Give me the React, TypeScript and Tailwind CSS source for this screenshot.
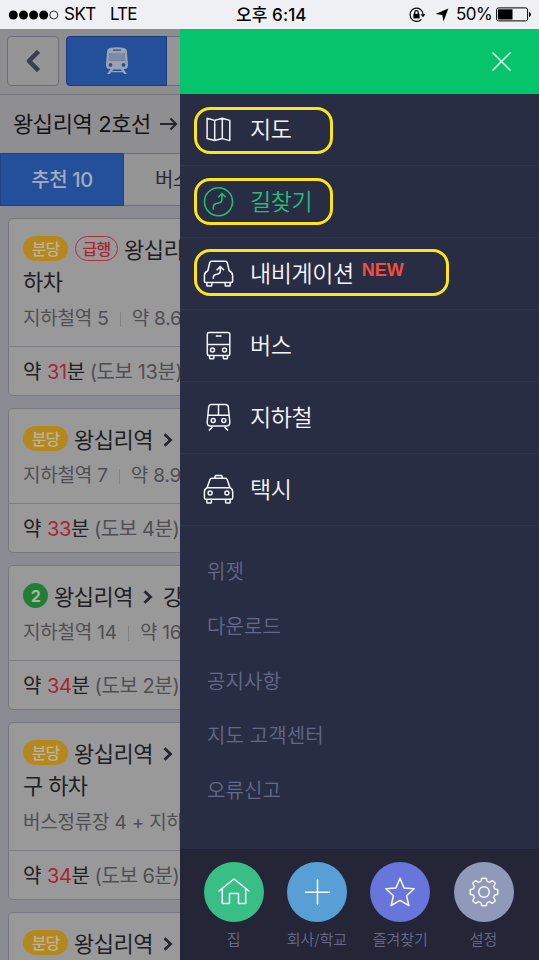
import type { ReactNode } from 'react';

interface Route {
  id: number;
  badge: ReactNode;
  title: ReactNode;
  titleEnd?: string;
  meta: string[];
  minutes: number;
  walk: string;
}

const BundangBadge = () => (
  <span className="flex h-[25px] w-[45px] shrink-0 items-center justify-center rounded-full bg-[#b4881c] pt-px text-[16px] font-medium tracking-[-1px] text-[#b9b4a4]">
    분당
  </span>
);

const ExpressBadge = () => (
  <span className="ml-[7px] flex h-[25px] w-[43px] shrink-0 items-center justify-center rounded-full border border-[#a83244] pt-px text-[16px] font-medium tracking-[-0.8px] text-[#a82438]">
    급행
  </span>
);

const LineTwoBadge = () => (
  <span className="flex size-[25px] shrink-0 items-center justify-center rounded-full bg-[#1f7f35] text-[16px] font-bold text-[#a9b5a9]">
    2
  </span>
);

const Arrow = () => (
  <svg className="ml-[10px] mr-[10px] shrink-0" width="10" height="14" viewBox="0 0 10 14" fill="none" stroke="#25262e" strokeWidth="2.8">
    <path d="M1.5 1.3L7.5 7L1.5 12.7" />
  </svg>
);

const routes: Route[] = [
  {
    id: 1,
    badge: (
      <>
        <BundangBadge />
        <ExpressBadge />
      </>
    ),
    title: '왕십리역',
    titleEnd: '하차',
    meta: ['지하철역 5', '약 8.6km'],
    minutes: 31,
    walk: '(도보 13분)',
  },
  { id: 2, badge: <BundangBadge />, title: <>왕십리역<Arrow /></>, meta: ['지하철역 7', '약 8.9km'], minutes: 33, walk: '(도보 4분)' },
  { id: 3, badge: <LineTwoBadge />, title: <>왕십리역<Arrow />강남역</>, meta: ['지하철역 14', '약 16km'], minutes: 34, walk: '(도보 2분)' },
  {
    id: 4,
    badge: <BundangBadge />,
    title: <>왕십리역<Arrow /></>,
    titleEnd: '구 하차',
    meta: ['버스정류장 4 + 지하철역 5'],
    minutes: 34,
    walk: '(도보 6분)',
  },
  { id: 5, badge: <BundangBadge />, title: <>왕십리역<Arrow /></>, meta: ['지하철역 8', '약 9.1km'], minutes: 36, walk: '(도보 5분)' },
];

function RouteCard({ route }: { route: Route }) {
  return (
    <div className="w-[400px] shrink-0 rounded-[5px] border border-[#77777f] bg-[#999999]">
      <div className="px-[14px] pt-[13px] pb-[8px]">
        <div className="flex h-[33px] items-center text-[22px] tracking-[-0.5px] text-[#202024]">
          {route.badge}
          <span className="ml-[6px] flex items-center pt-[3px] whitespace-nowrap">{route.title}</span>
        </div>
        {route.titleEnd && (
          <div className="h-[33px] text-[22px] leading-[34px] tracking-[-0.6px] text-[#202024]">{route.titleEnd}</div>
        )}
        <div className="flex h-[40px] items-center pt-[2px] text-[19px] tracking-[-0.2px] whitespace-nowrap text-[#4f4f53]">
          {route.meta.map((item, index) => (
            <span key={item} className="flex items-center">
              {index > 0 && <span className="mx-[11px] h-[15px] w-px bg-[#828286]" />}
              {item}
            </span>
          ))}
        </div>
      </div>
      <div className="flex h-[49px] items-center border-t border-[#7d7d83] px-[14px] pt-[2px] text-[20px] tracking-[-0.4px] whitespace-nowrap text-[#202024]">
        약<span className="ml-[6px] text-[#a82438]">{route.minutes}</span>분
        <span className="ml-[5px] text-[#4f4f53]">{route.walk}</span>
      </div>
    </div>
  );
}

function StatusBar() {
  return (
    <div className="flex h-[29px] items-center bg-[#eff0f4] text-[17px] text-black">
      <svg className="ml-[8px] shrink-0" width="52" height="12" viewBox="0 0 52 12">
        <circle cx="5.3" cy="6" r="4.5" />
        <circle cx="15.5" cy="6" r="4.5" />
        <circle cx="25.6" cy="6" r="4.5" />
        <circle cx="35.7" cy="6" r="4.5" />
        <circle cx="45.8" cy="6" r="4" fill="none" stroke="#000" strokeWidth="0.8" />
      </svg>
      <span className="ml-[4px] w-[46px] pt-px tracking-[-0.5px]">SKT</span>
      <span className="w-[126px] pt-px tracking-[-0.9px]">LTE</span>
      <span className="w-[172px] pt-[2px] text-[17px] font-medium tracking-[0.1px] whitespace-nowrap">오후 6:14</span>
      <svg className="shrink-0" width="19" height="18" viewBox="0 0 19 18" fill="none" stroke="#000" strokeWidth="1.2">
        <path d="M13.4 13.3A6.6 6.6 0 1 1 15.2 8.6" />
        <path d="M12.6 8.2H17.4L15 11.3Z" fill="#000" stroke="none" />
        <rect x="5.4" y="7.8" width="6.2" height="4.6" fill="#000" stroke="none" />
        <path d="M6.7 8V6.4a1.8 1.8 0 0 1 3.6 0V8" />
      </svg>
      <svg className="ml-[8px] shrink-0" width="14" height="14" viewBox="0 0 14 14">
        <path d="M13.3 0.5L8.5 13.5L7.3 6.9L0.5 6.1Z" />
      </svg>
      <span className="ml-[7px] w-[40px] pt-px tracking-[-0.5px]">50%</span>
      <svg className="shrink-0" width="36" height="15" viewBox="0 0 36 15">
        <rect x="0.6" y="0.9" width="31" height="13" rx="2" fill="none" stroke="#000" />
        <rect x="2" y="2.3" width="14.5" height="10.2" />
        <path d="M33 5v5q2-.8 2-2.5T33 5z" />
      </svg>
    </div>
  );
}

function RoutePage() {
  return (
    <div className="flex w-[180px] shrink-0 flex-col overflow-hidden bg-[#8b8c91]">
      <div className="flex h-[66px] shrink-0 items-start gap-[7px] border-b border-[#727278] bg-[#8e8e90] pt-[7px] pl-[7px]">
        <div className="flex h-[50px] w-[52px] shrink-0 items-center justify-center rounded-[4px] border border-[#6d6e7b] bg-[#959595]">
          <svg width="16" height="24" viewBox="0 0 16 24" fill="none" stroke="#3b3d52" strokeWidth="4.6" strokeLinejoin="round">
            <path d="M13.5 2.4L4 12L13.5 21.6" />
          </svg>
        </div>
        <div className="flex h-[50px] w-[200px] shrink-0 rounded-[4px] border border-[#6d6e7b] bg-[#959595]">
          <div className="-my-px -ml-px flex w-[101px] items-center justify-center rounded-l-[4px] border border-[#1a3c7c] bg-[#24509b]">
            <svg width="24" height="28" viewBox="0 0 24 28" fill="#9da3ae">
              <path fillRule="evenodd" d="M5 1Q12 -0.6 19 1Q21.6 1.6 21.9 4L23 18Q23 22 19.5 22H4.5Q1 22 1 18L2.1 4Q2.4 1.6 5 1ZM4.4 6L3.7 13.5H20.3L19.6 6ZM8 2.4V3.8H16V2.4ZM5.5 16A1.9 1.9 0 1 0 5.5 19.8A1.9 1.9 0 1 0 5.5 16ZM18.5 16A1.9 1.9 0 1 0 18.5 19.8A1.9 1.9 0 1 0 18.5 16Z" />
              <path d="M4.4 6L3.7 13.5H20.3L19.6 6Z" fill="#7c8aa8" />
              <path d="M5.5 22L2 27H5L6 25.3H18L19 27H22L18.5 22Z" />
              <path d="M8 22.6H16L16.8 24H7.2Z" fill="#24509b" />
            </svg>
          </div>
        </div>
      </div>
      <div className="flex h-[58px] shrink-0 items-center bg-[#8f8f91] pl-[13px] text-[22px] tracking-[-0.4px] whitespace-nowrap text-[#141418]">
        왕십리역 2호선
        <svg className="ml-[9px] shrink-0" width="18" height="14" viewBox="0 0 18 14" fill="none" stroke="#26272e" strokeWidth="2.1">
          <path d="M0 7H16M10.5 1.5L16 7L10.5 12.5" />
        </svg>
      </div>
      <div className="flex h-[53px] shrink-0 border-y border-[#707078] bg-[#959595] text-[20px] whitespace-nowrap">
        <div className="-my-px flex w-[124px] shrink-0 items-center justify-center border border-[#1c4289] bg-[#24509b] pt-px font-medium tracking-[-0.4px] text-[#a5abb8]">
          추천 10
        </div>
        <div className="flex items-center pt-px pl-[31px] tracking-[-0.6px] text-[#2a2a30]">버스 4</div>
      </div>
      <div className="flex flex-col gap-[12px] pt-[12px] pl-[8px]">
        {routes.map((route) => (
          <RouteCard key={route.id} route={route} />
        ))}
      </div>
    </div>
  );
}

const menuIcons = {
  map: (
    <path d="M5.1 4.2L12.7 6.4L20.3 4.2L27.8 6.4V26.6L20.3 24.6L12.7 26.6L5.1 24.6ZM12.7 6.4V26.6M20.3 4.2V24.6" />
  ),
  directions: (
    <>
      <circle cx="16.5" cy="15.7" r="14" />
      <path d="M11.3 23.8V21.2Q11.3 17.9 14.4 17.4L16.8 17Q20 16.4 20 13.2V8M16.2 11.3L20 7.5L23.8 11.3" />
    </>
  ),
  navi: (
    <>
      <path d="M9.8 3.2H23.2Q24.9 3.2 25.3 4.8L27.2 12.7Q30.6 14.3 30.6 17.6V23.2Q30.6 24.4 29.4 24.4H3.6Q2.4 24.4 2.4 23.2V17.6Q2.4 14.3 5.8 12.7L7.7 4.8Q8.1 3.2 9.8 3.2Z" />
      <path d="M4.8 24.4V27.2Q4.8 28.1 5.7 28.1H9Q9.8 28.1 9.8 27.2V24.4M23.2 24.4V27.2Q23.2 28.1 24 28.1H27.3Q28.2 28.1 28.2 27.2V24.4" />
      <path d="M11.3 21V19.6Q11.3 16.9 13.8 16.4L15.8 16Q18.3 15.5 18.3 13V9M14.6 12.2L18.3 8.5L22 12.2" />
    </>
  ),
  bus: (
    <>
      <rect x="5.3" y="2.5" width="22.5" height="23" rx="1.8" />
      <path d="M5.3 14.4H27.8M13.8 6.1H19.6" />
      <circle cx="10.5" cy="20" r="2" />
      <circle cx="22.5" cy="20" r="2" />
      <path d="M7.6 25.5V28Q7.6 28.8 8.4 28.8H11Q11.8 28.8 11.8 28V25.5M21.3 25.5V28Q21.3 28.8 22.1 28.8H24.7Q25.5 28.8 25.5 28V25.5" />
    </>
  ),
  subway: (
    <>
      <path d="M9.6 2.4H23.4Q26 2.4 26.3 5L27.8 20Q28 24.1 24.5 24.1H8.5Q5 24.1 5.2 20L6.7 5Q7 2.4 9.6 2.4ZM5.9 13.3H27.1M16.5 2.4V13.3M10.4 25L6.9 28.6M22.6 25L26.1 28.6" />
      <circle cx="11.2" cy="18.4" r="2" />
      <circle cx="21.8" cy="18.4" r="2" />
    </>
  ),
  taxi: (
    <>
      <path d="M13.1 4.2V2.2Q13.1 1.4 13.9 1.4H19.3Q20.1 1.4 20.1 2.2V4.2M10 4.3H23.2Q24.8 4.3 25.3 5.8L28 13.7Q30.7 15 30.7 18V23.8Q30.7 25.3 29.2 25.3H3.8Q2.4 25.3 2.4 23.8V18Q2.4 15 5.1 13.7L7.9 5.8Q8.4 4.3 10 4.3ZM5.1 13.7H28" />
      <circle cx="8.1" cy="19" r="2" />
      <circle cx="24.9" cy="19" r="2" />
      <path d="M4.8 25.3V28.3Q4.8 29.1 5.6 29.1H8.6Q9.4 29.1 9.4 28.3V25.3M23.6 25.3V28.3Q23.6 29.1 24.4 29.1H27.4Q28.2 29.1 28.2 28.3V25.3" />
    </>
  ),
};

interface MenuItem {
  icon: keyof typeof menuIcons;
  label: string;
  color: string;
  // size and offset of the yellow marker drawn round the item
  marker?: string;
  isNew?: boolean;
}

const menuItems: MenuItem[] = [
  { icon: 'map', label: '지도', color: 'text-[#f4f5fb]', marker: 'top-[13px] w-[139px]' },
  { icon: 'directions', label: '길찾기', color: 'text-[#22bd78]', marker: 'top-[12px] w-[139px]' },
  { icon: 'navi', label: '내비게이션', color: 'text-[#f4f5fb]', marker: 'top-[11px] w-[255px]', isNew: true },
  { icon: 'bus', label: '버스', color: 'text-[#f4f5fb]' },
  { icon: 'subway', label: '지하철', color: 'text-[#f4f5fb]' },
  { icon: 'taxi', label: '택시', color: 'text-[#f4f5fb]' },
];

const links = ['위젯', '다운로드', '공지사항', '지도 고객센터', '오류신고'];

const shortcuts = [
  {
    label: '집',
    color: 'bg-[#39be85]',
    icon: <path d="M2 16L17 4L32 16M5.3 13.6V28.6H12.5V18.6H21.5V28.6H28.7V13.6" />,
  },
  { label: '회사/학교', color: 'bg-[#589fd5]', icon: <path d="M17.5 5V29.5M5.5 17.3H29.5" /> },
  {
    label: '즐겨찾기',
    color: 'bg-[#6875da]',
    icon: <path d="M17 3.3L21 12.9L31.2 13.8L23.5 20.7L25.9 30.5L17 25.3L8.1 30.5L10.5 20.7L2.8 13.8L13 12.9Z" />,
  },
  {
    label: '설정',
    color: 'bg-[#9099b9]',
    icon: (
      <>
        <circle cx="17" cy="17" r="5.3" />
        <path d="M15.6 3.2H18.4Q19.2 3.2 19.4 4L19.9 5.9Q20.3 6.6 21.4 6.9Q22.4 7.4 23.2 7L24.8 6Q25.6 5.6 26.2 6.2L27.8 7.8Q28.4 8.4 28 9.2L27 10.8Q26.6 11.6 27.1 12.6Q27.4 13.7 28.1 14.1L30 14.6Q30.8 14.8 30.8 15.6V18.4Q30.8 19.2 30 19.4L28.1 19.9Q27.4 20.3 27.1 21.4Q26.6 22.4 27 23.2L28 24.8Q28.4 25.6 27.8 26.2L26.2 27.8Q25.6 28.4 24.8 28L23.2 27Q22.4 26.6 21.4 27.1Q20.3 27.4 19.9 28.1L19.4 30Q19.2 30.8 18.4 30.8H15.6Q14.8 30.8 14.6 30L14.1 28.1Q13.7 27.4 12.6 27.1Q11.6 26.6 10.8 27L9.2 28Q8.4 28.4 7.8 27.8L6.2 26.2Q5.6 25.6 6 24.8L7 23.2Q7.4 22.4 6.9 21.4Q6.6 20.3 5.9 19.9L4 19.4Q3.2 19.2 3.2 18.4V15.6Q3.2 14.8 4 14.6L5.9 14.1Q6.6 13.7 6.9 12.6Q7.4 11.6 7 10.8L6 9.2Q5.6 8.4 6.2 7.8L7.8 6.2Q8.4 5.6 9.2 6L10.8 7Q11.6 7.4 12.6 6.9Q13.7 6.6 14.1 5.9L14.6 4Q14.8 3.2 15.6 3.2Z" />
      </>
    ),
  },
];

function Drawer() {
  return (
    <div className="flex flex-1 flex-col bg-[#292d43]">
      <div className="flex h-[65px] shrink-0 items-center justify-end bg-[#05c46b] pr-[27px]">
        <svg width="21" height="21" viewBox="0 0 21 21" fill="none" stroke="#e9fff4" strokeWidth="1.5">
          <path d="M1.5 1.5L19.5 19.5M19.5 1.5L1.5 19.5" />
        </svg>
      </div>

      {/* Main menu */}
      {menuItems.map((item) => (
        <div key={item.icon} className={`relative flex h-[72px] shrink-0 items-center border-b border-[#31354d] pl-[22px] ${item.color}`}>
          {item.marker && (
            <div className={`absolute left-[14px] h-[47px] rounded-[16px] border-3 border-[#fce51c] ${item.marker}`} />
          )}
          <svg className="mt-px" width="32" height="32" viewBox="0 0 32 32" fill="none" stroke="currentColor" strokeWidth="1.5" strokeLinejoin="round">
            {menuIcons[item.icon]}
          </svg>
          <span className="ml-[16px] pt-[2px] text-[23px] font-[350] tracking-[-0.4px]">{item.label}</span>
          {item.isNew && (
            <span className="mb-[8px] ml-[8px] font-['Liberation_Sans'] text-[18px] leading-none font-bold text-[#f0503c]">NEW</span>
          )}
        </div>
      ))}

      {/* Secondary links */}
      <div className="flex-1 pt-[19px] pl-[27px]">
        {links.map((link) => (
          <div key={link} className="flex h-[54.7px] items-center text-[20px] font-[350] tracking-[0.1px] text-[#636889]">
            {link}
          </div>
        ))}
      </div>

      {/* Shortcuts */}
      <div className="flex h-[111px] shrink-0 border-t border-[#1e2031] bg-[#242638] pt-[12px] pl-[12px]">
        {shortcuts.map((shortcut) => (
          <div key={shortcut.label} className="flex w-[83.3px] flex-col items-center">
            <div className={`flex size-[60px] items-center justify-center rounded-full ${shortcut.color}`}>
              <svg width="34" height="34" viewBox="0 0 34 34" fill="none" stroke="#f7f9ff" strokeWidth="1.5" strokeLinejoin="round" strokeLinecap="round">
                {shortcut.icon}
              </svg>
            </div>
            <span className="mt-[5px] text-[15px] leading-[25px] font-[350] text-[#666a88]">{shortcut.label}</span>
          </div>
        ))}
      </div>
    </div>
  );
}

export default function App() {
  return (
    <div className="flex h-[960px] w-[539px] flex-col overflow-hidden bg-[#292d43] font-[Inter,'Noto_Sans_CJK_KR',sans-serif]">
      <StatusBar />
      <div className="flex min-h-0 flex-1">
        <RoutePage />
        <Drawer />
      </div>
    </div>
  );
}
